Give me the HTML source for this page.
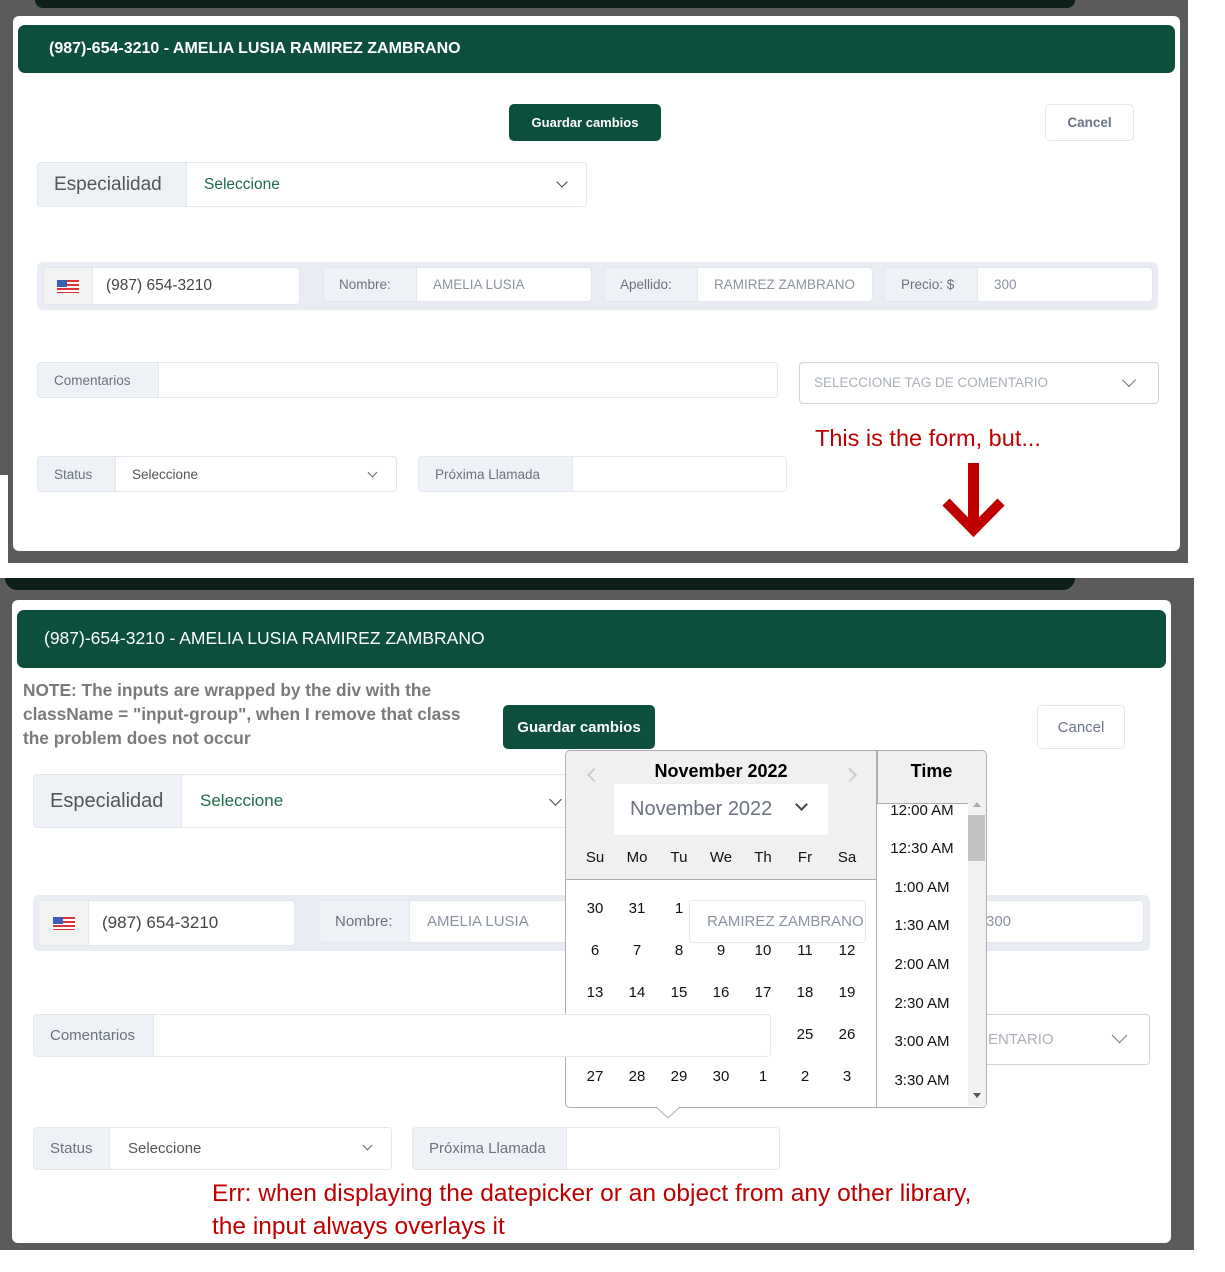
<!DOCTYPE html>
<html><head><meta charset="utf-8"><style>
*{box-sizing:border-box;margin:0;padding:0}
body{width:1225px;height:1272px;background:#fff;position:relative;overflow:hidden;font-family:"Liberation Sans",sans-serif}
.a{position:absolute}
.gray{background:#5b5b5b}
.modal{background:#fff;border-radius:6px}
.hdr{background:#0b4f3c;border-radius:7px;color:#fff}
.btn{background:#0b4f3c;color:#fff;font-weight:bold;border-radius:5px;display:flex;align-items:center;justify-content:center}
.cbtn{background:#fff;border:1px solid #e2e6ec;color:#6b7585;font-weight:bold;border-radius:5px;display:flex;align-items:center;justify-content:center}
.lbl{background:#eef2f7;border:1px solid #e2e7ee;color:#6b7280;display:flex;align-items:center;border-radius:4px 0 0 4px}
.inp{background:#fff;border:1px solid #e2e7ee;color:#8a93a0;display:flex;align-items:center;border-radius:0 4px 4px 0}
.chev{position:absolute;width:9px;height:9px;border-right:1.6px solid #555;border-bottom:1.6px solid #555;transform:rotate(45deg)}
.flag{width:22px;height:13px;background:repeating-linear-gradient(#d33 0 2px,#fff 2px 4px);position:relative}
.flag:after{content:"";position:absolute;left:0;top:0;width:10px;height:7px;background:#3b5fb5}
.red{color:#c00000}
.dp{background:#f0f0f0}
.dn{position:absolute;width:30px;text-align:center;font-size:15px;color:#111}
.tm{position:absolute;left:876px;width:92px;text-align:center;font-size:15px;color:#111}
</style></head><body>

<!-- TOP PANEL -->
<div class="a gray" style="left:0;top:0;width:1188px;height:475px"></div>
<div class="a gray" style="left:8px;top:475px;width:1180px;height:88px"></div>
<div class="a" style="left:35px;top:0;width:1040px;height:8px;background:#0c1f18;border-radius:0 0 20px 20px"></div>
<div class="a modal" style="left:13px;top:16px;width:1167px;height:535px"></div>
<div class="a hdr" style="left:18px;top:25px;width:1157px;height:48px;font-size:16px;font-weight:bold;padding:15px 0 0 31px">(987)-654-3210 - AMELIA LUSIA RAMIREZ ZAMBRANO</div>
<div class="a btn" style="left:509px;top:104px;width:152px;height:37px;font-size:13px">Guardar cambios</div>
<div class="a cbtn" style="left:1045px;top:104px;width:89px;height:37px;font-size:13.5px">Cancel</div>

<div class="a lbl" style="left:37px;top:162px;width:150px;height:45px;font-size:19px;padding-left:16px;color:#555">Especialidad</div>
<div class="a inp" style="left:186px;top:162px;width:401px;height:45px;font-size:15.5px;padding-left:17px;color:#1f6b4a">Seleccione<span class="chev" style="right:20px;top:15px;width:8px;height:8px;border-color:#444"></span></div>

<div class="a" style="left:37px;top:262px;width:1121px;height:48px;background:#e9edf3;border-radius:6px"></div>
<div class="a lbl" style="left:43px;top:267px;width:50px;height:38px;background:#f3f3f3;justify-content:center"><div class="flag"></div></div>
<div class="a inp" style="left:92px;top:267px;width:208px;height:38px;font-size:15.5px;padding-left:13px;color:#444">(987) 654-3210</div>
<div class="a lbl" style="left:323px;top:267px;width:94px;height:35px;font-size:13.5px;padding-left:15px">Nombre:</div>
<div class="a inp" style="left:416px;top:267px;width:176px;height:35px;font-size:13.5px;padding-left:16px">AMELIA LUSIA</div>
<div class="a lbl" style="left:604px;top:267px;width:94px;height:35px;font-size:13.5px;padding-left:15px">Apellido:</div>
<div class="a inp" style="left:697px;top:267px;width:176px;height:35px;font-size:13.5px;padding-left:16px;overflow:hidden;white-space:nowrap">RAMIREZ ZAMBRANO</div>
<div class="a lbl" style="left:884px;top:267px;width:94px;height:35px;font-size:13.5px;padding-left:16px">Precio: $</div>
<div class="a inp" style="left:977px;top:267px;width:176px;height:35px;font-size:13.5px;padding-left:16px">300</div>

<div class="a lbl" style="left:37px;top:362px;width:122px;height:36px;font-size:13.5px;padding-left:16px">Comentarios</div>
<div class="a inp" style="left:158px;top:362px;width:620px;height:36px"></div>
<div class="a" style="left:799px;top:362px;width:360px;height:42px;border:1px solid #d0d4d9;border-radius:4px;font-size:13.5px;color:#aab0b8;padding:12px 0 0 14px">SELECCIONE TAG DE COMENTARIO<span class="chev" style="right:24px;top:12px;width:10px;height:10px;border-color:#777"></span></div>

<div class="a lbl" style="left:37px;top:456px;width:79px;height:36px;font-size:13.5px;padding-left:16px">Status</div>
<div class="a inp" style="left:115px;top:456px;width:282px;height:36px;font-size:13.5px;padding-left:16px;color:#555">Seleccione<span class="chev" style="right:20px;top:12px;width:7px;height:7px;border-color:#666"></span></div>
<div class="a lbl" style="left:418px;top:456px;width:155px;height:36px;font-size:13.5px;padding-left:16px">Próxima Llamada</div>
<div class="a inp" style="left:572px;top:456px;width:215px;height:36px"></div>

<div class="a red" style="left:815px;top:425px;font-size:23.5px">This is the form, but...</div>
<svg class="a" style="left:940px;top:460px" width="68" height="80"><rect x="28" y="3" width="11" height="66" fill="#c00000"/><path d="M6 42 L33.5 70 L61 42" fill="none" stroke="#c00000" stroke-width="10"/></svg>

<!-- BOTTOM PANEL -->
<div class="a gray" style="left:0;top:578px;width:1194px;height:672px"></div>
<div class="a" style="left:5px;top:578px;width:1070px;height:12px;background:#0c1f18;border-radius:0 0 20px 20px"></div>
<div class="a modal" style="left:12px;top:600px;width:1159px;height:643px"></div>
<div class="a hdr" style="left:17px;top:610px;width:1149px;height:58px;font-size:17.5px;padding:18px 0 0 27px">(987)-654-3210 - AMELIA LUSIA RAMIREZ ZAMBRANO</div>
<div class="a" style="left:23px;top:678px;font-size:17.3px;font-weight:bold;color:#7a7a7a;line-height:24px">NOTE: The inputs are wrapped by the div with the<br>className = "input-group", when I remove that class<br>the problem does not occur</div>
<div class="a btn" style="left:503px;top:705px;width:152px;height:44px;font-size:15px">Guardar cambios</div>
<div class="a cbtn" style="left:1037px;top:705px;width:88px;height:44px;font-size:15px;font-weight:normal">Cancel</div>

<div class="a lbl" style="left:33px;top:774px;width:149px;height:54px;font-size:20px;padding-left:16px;color:#555">Especialidad</div>
<div class="a inp" style="left:181px;top:774px;width:400px;height:54px;font-size:17px;padding-left:18px;color:#1f6b4a">Seleccione<span class="chev" style="right:20px;top:20px;border-color:#444"></span></div>

<div class="a" style="left:33px;top:895px;width:1117px;height:56px;background:#e9edf3;border-radius:6px"></div>
<div class="a lbl" style="left:38px;top:900px;width:51px;height:46px;background:#f3f3f3;justify-content:center"><div class="flag"></div></div>
<div class="a inp" style="left:88px;top:900px;width:207px;height:46px;font-size:17px;padding-left:13px;color:#444">(987) 654-3210</div>
<div class="a lbl" style="left:318px;top:900px;width:92px;height:43px;font-size:15px;padding-left:16px">Nombre:</div>
<div class="a inp" style="left:409px;top:900px;width:176px;height:43px;font-size:15px;padding-left:17px">AMELIA LUSIA</div>
<div class="a lbl" style="left:33px;top:1014px;width:121px;height:43px;font-size:15px;padding-left:16px">Comentarios</div>
<div class="a" style="left:970px;top:1014px;width:180px;height:51px;border:1px solid #d0d4d9;border-radius:0 4px 4px 0;border-left:none;font-size:15px;color:#aab0b8;padding:16px 0 0 18px">ENTARIO<span class="chev" style="right:24px;top:15px;width:11px;height:11px;border-color:#777"></span></div>
<div class="a inp" style="left:969px;top:900px;width:175px;height:43px;font-size:15px;padding-left:16px">300</div>

<!-- datepicker -->
<div class="a" style="left:565px;top:750px;width:422px;height:358px;background:#fff;border:1px solid #aeaeae;border-radius:5px;overflow:hidden">
 <div class="a dp" style="left:0;top:0;width:311px;height:129px;border-bottom:1px solid #aeaeae"></div>
 <div class="a dp" style="left:311px;top:0;width:110px;height:53px;border-bottom:1px solid #aeaeae;border-left:1px solid #aeaeae"></div>
 <div class="a" style="left:310px;top:0;width:1px;height:358px;background:#aeaeae"></div>
</div>
<div class="a" style="left:565px;top:761px;width:312px;text-align:center;font-size:18px;font-weight:bold;color:#000">November 2022</div>
<div class="a" style="left:877px;top:761px;width:109px;text-align:center;font-size:18px;font-weight:bold;color:#000">Time</div>
<div class="a" style="left:589px;top:770px;width:10px;height:10px;border-left:2px solid #ccc;border-bottom:2px solid #ccc;transform:rotate(45deg)"></div>
<div class="a" style="left:845px;top:770px;width:10px;height:10px;border-right:2px solid #ccc;border-top:2px solid #ccc;transform:rotate(45deg)"></div>
<div class="a" style="left:613px;top:783px;width:216px;height:53px;background:#fff;border:1px solid #eee;font-size:20px;color:#6b7280;padding:14px 0 0 16px">November 2022<span class="chev" style="right:22px;top:16px;width:9px;height:9px;border-color:#444;border-width:2px"></span></div>
<div class="dn" style="left:580px;top:849px">Su</div><div class="dn" style="left:622px;top:849px">Mo</div><div class="dn" style="left:664px;top:849px">Tu</div><div class="dn" style="left:706px;top:849px">We</div><div class="dn" style="left:748px;top:849px">Th</div><div class="dn" style="left:790px;top:849px">Fr</div><div class="dn" style="left:832px;top:849px">Sa</div>
<div class="dn" style="left:580px;top:900px">30</div><div class="dn" style="left:622px;top:900px">31</div><div class="dn" style="left:664px;top:900px">1</div>
<div class="dn" style="left:580px;top:942px">6</div><div class="dn" style="left:622px;top:942px">7</div><div class="dn" style="left:664px;top:942px">8</div><div class="dn" style="left:706px;top:942px">9</div><div class="dn" style="left:748px;top:942px">10</div><div class="dn" style="left:790px;top:942px">11</div><div class="dn" style="left:832px;top:942px">12</div>
<div class="dn" style="left:580px;top:984px">13</div><div class="dn" style="left:622px;top:984px">14</div><div class="dn" style="left:664px;top:984px">15</div><div class="dn" style="left:706px;top:984px">16</div><div class="dn" style="left:748px;top:984px">17</div><div class="dn" style="left:790px;top:984px">18</div><div class="dn" style="left:832px;top:984px">19</div>
<div class="dn" style="left:790px;top:1026px">25</div><div class="dn" style="left:832px;top:1026px">26</div>
<div class="dn" style="left:580px;top:1068px">27</div><div class="dn" style="left:622px;top:1068px">28</div><div class="dn" style="left:664px;top:1068px">29</div><div class="dn" style="left:706px;top:1068px">30</div><div class="dn" style="left:748px;top:1068px">1</div><div class="dn" style="left:790px;top:1068px">2</div><div class="dn" style="left:832px;top:1068px">3</div>
<div class="tm" style="top:802px">12:00 AM</div><div class="tm" style="top:840px">12:30 AM</div><div class="tm" style="top:879px">1:00 AM</div><div class="tm" style="top:917px">1:30 AM</div><div class="tm" style="top:956px">2:00 AM</div><div class="tm" style="top:995px">2:30 AM</div><div class="tm" style="top:1033px">3:00 AM</div><div class="tm" style="top:1072px">3:30 AM</div>
<div class="a" style="left:968px;top:797px;width:18px;height:309px;background:#f1f1f1"></div>
<div class="a" style="left:968px;top:815px;width:17px;height:46px;background:#c1c1c1"></div>
<div class="a" style="left:973px;top:802px;border:4px solid transparent;border-bottom:5px solid #aaa;border-top:none"></div>
<div class="a" style="left:973px;top:1093px;border:4px solid transparent;border-top:5px solid #555;border-bottom:none"></div>
<svg class="a" style="left:656px;top:1106px" width="24" height="14"><path d="M0 1 L12 12 L24 1" fill="#fff" stroke="#aeaeae"/></svg>

<!-- overlaying inputs -->
<div class="a inp" style="left:689px;top:900px;width:177px;height:43px;font-size:15px;padding-left:17px;border-radius:4px;white-space:nowrap;overflow:hidden">RAMIREZ ZAMBRANO</div>
<div class="a inp" style="left:153px;top:1014px;width:618px;height:43px"></div>

<div class="a lbl" style="left:33px;top:1127px;width:77px;height:43px;font-size:15px;padding-left:16px">Status</div>
<div class="a inp" style="left:109px;top:1127px;width:283px;height:43px;font-size:15px;padding-left:18px;color:#555">Seleccione<span class="chev" style="right:20px;top:14px;width:7px;height:7px;border-color:#666"></span></div>
<div class="a lbl" style="left:412px;top:1127px;width:155px;height:43px;font-size:15px;padding-left:16px">Próxima Llamada</div>
<div class="a inp" style="left:566px;top:1127px;width:214px;height:43px"></div>

<div class="a red" style="left:212px;top:1177px;font-size:24.5px;line-height:33px;white-space:nowrap">Err: when displaying the datepicker or an object from any other library,<br>the input always overlays it</div>
</body></html>
